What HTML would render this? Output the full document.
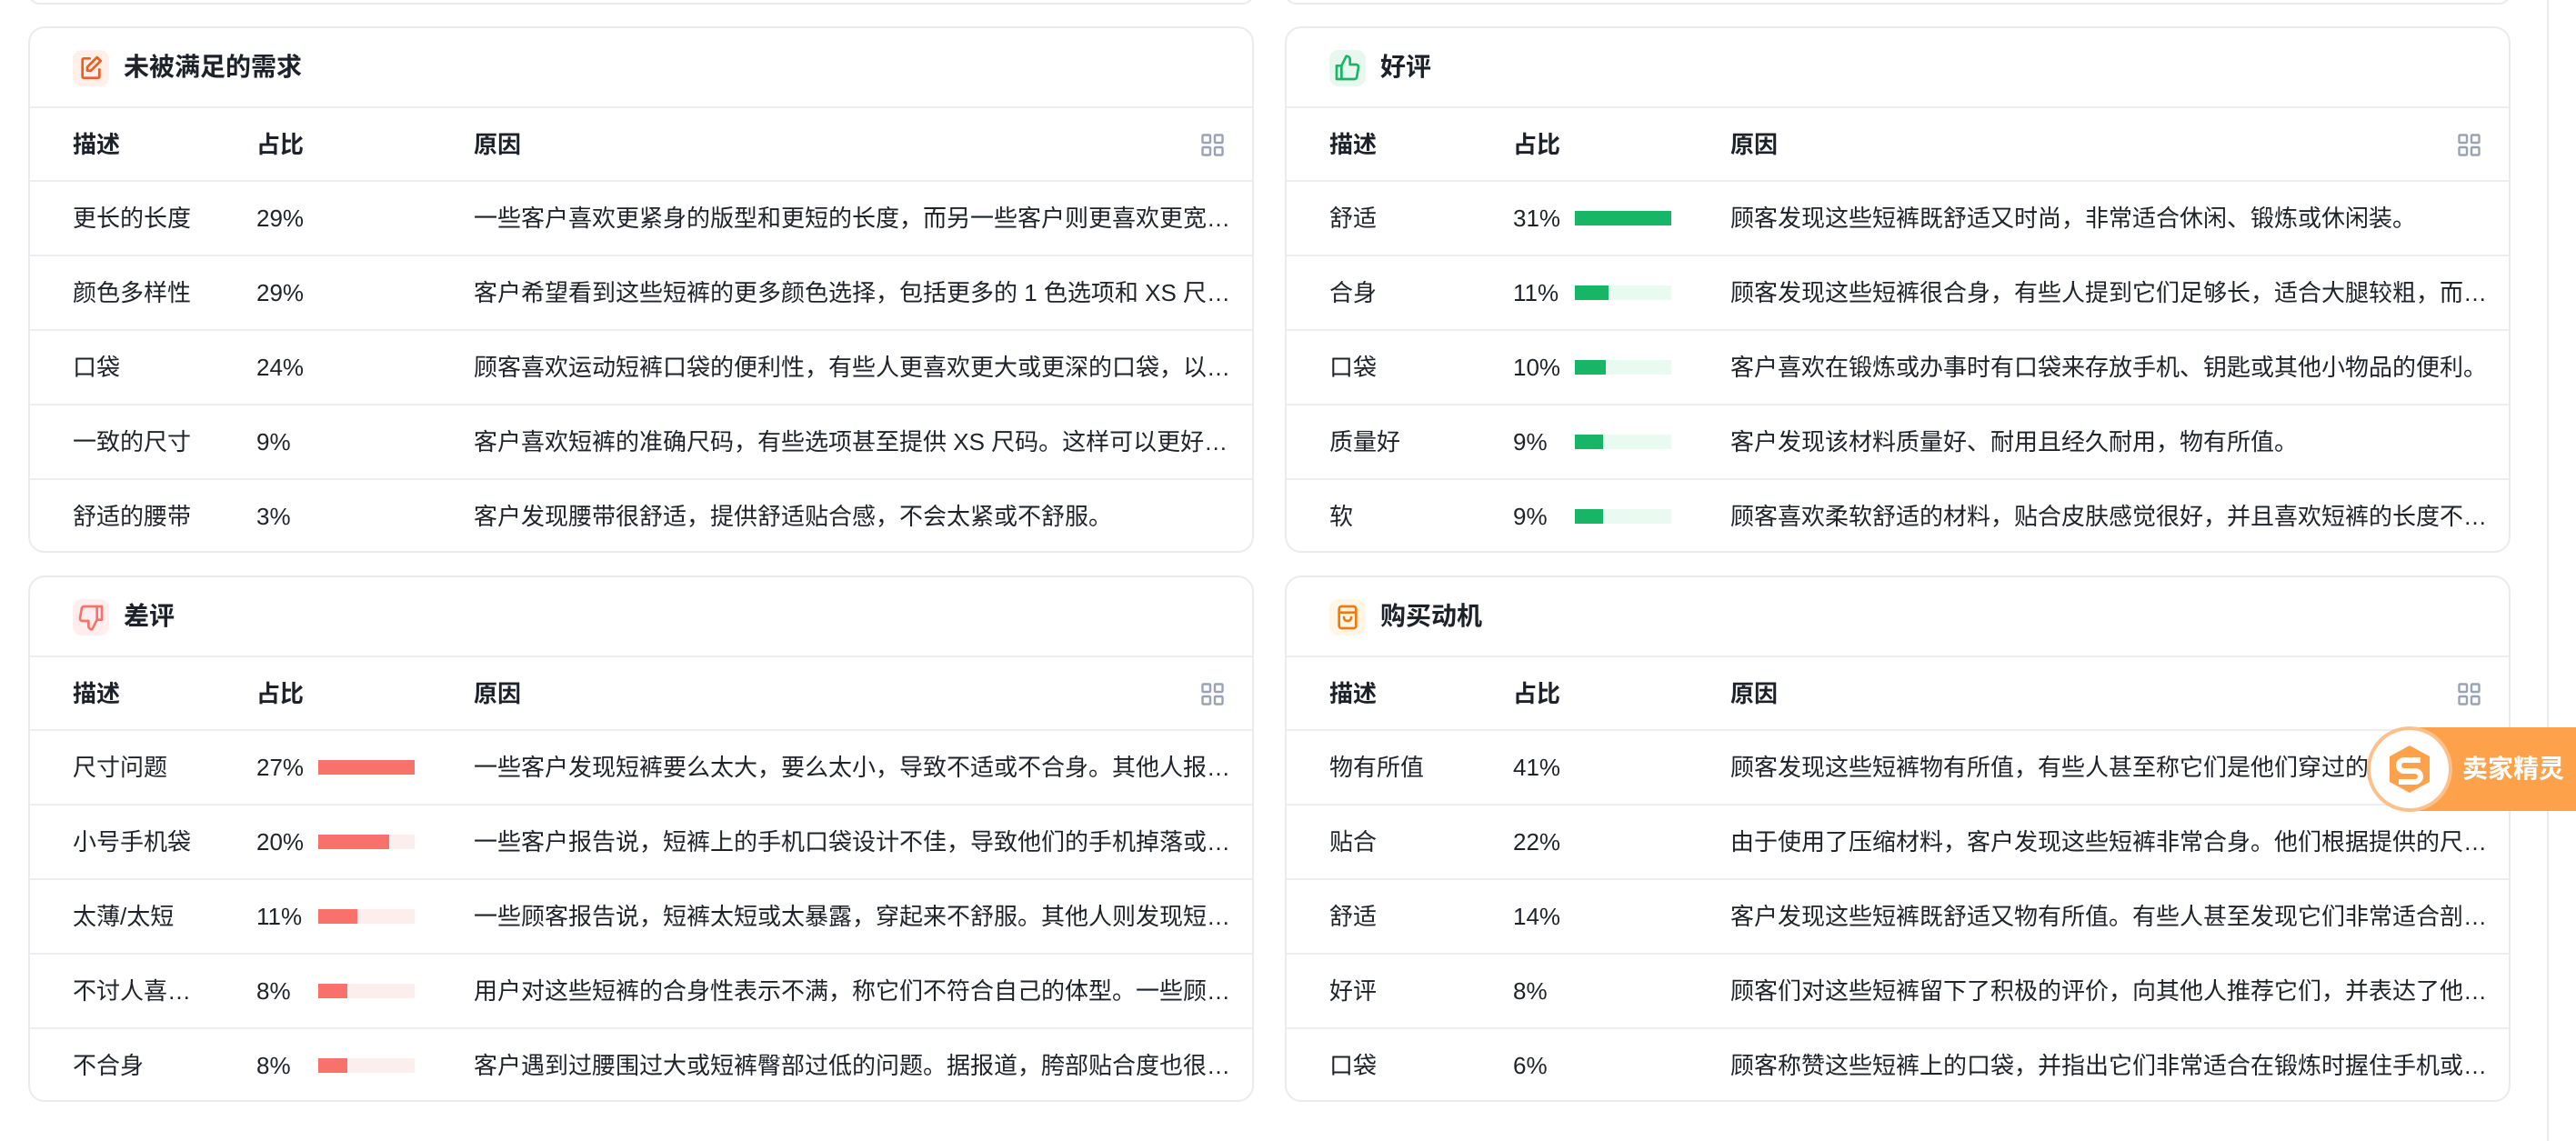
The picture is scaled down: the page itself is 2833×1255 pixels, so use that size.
<!DOCTYPE html>
<html><head><meta charset="utf-8"><style>
*{margin:0;padding:0;box-sizing:border-box}
body{width:2833px;height:1255px;background:#fff;position:relative;overflow:hidden;font-family:"Liberation Sans","Noto Sans CJK SC",sans-serif;color:#1f2329}
.card{position:absolute;width:1348px;height:579px;border:2px solid #e9ebef;border-radius:18px;background:#fff;overflow:hidden}
.title{height:88px;border-bottom:2px solid #eceef2;position:relative}
.ib{position:absolute;left:47px;top:24px;width:40px;height:40px;border-radius:10px;display:flex;align-items:center;justify-content:center}
.tt{position:absolute;left:103px;top:0;line-height:86px;font-size:28px;font-weight:bold;color:#1d2129}
.row{height:82px;border-bottom:2px solid #eceef2;position:relative;font-size:26px;line-height:80px}
.row:last-child{border-bottom:none}
.hd{height:81px;font-weight:bold;color:#1d2129}
.c1{position:absolute;left:47px;width:140px;white-space:nowrap;overflow:hidden;text-overflow:ellipsis}
.c2{position:absolute;left:249px}
.c3{position:absolute;left:488px;width:834px;white-space:nowrap;overflow:hidden;text-overflow:ellipsis}
.bar{position:absolute;left:317px;top:32px;width:106px;height:16px}
.g{background:#e9faf1}.g i{display:block;height:100%;background:#16b666}
.r{background:#fdeeee}.r i{display:block;height:100%;background:#f8716a}
.grid{position:absolute;left:1288px;top:28px}
</style></head><body>

<div style="position:absolute;left:31px;top:-20px;width:1348px;height:25px;border:2px solid #e9ebef;border-radius:18px"></div>
<div style="position:absolute;left:1413px;top:-20px;width:1348px;height:25px;border:2px solid #e9ebef;border-radius:18px"></div>
<div style="position:absolute;left:2801px;top:0;width:2px;height:1255px;background:#e8e9ee"></div>

<!-- card 1 -->
<div class="card" style="left:31px;top:29px">
<div class="title"><div class="ib" style="background:#fff1ea"><svg width="32" height="32" viewBox="0 0 24 24" fill="none" stroke="#f25c1f" stroke-width="2" stroke-linecap="round" stroke-linejoin="round"><path d="M11 4H6a1 1 0 0 0-1 1v14a1 1 0 0 0 1 1h12a1 1 0 0 0 1-1v-6"/><path d="M17 3l3 3-8 8h-3v-3z"/></svg></div><div class="tt">未被满足的需求</div></div>
<div class="row hd"><span class="c1">描述</span><span class="c2">占比</span><span class="c3">原因</span><svg class="grid" width="25" height="25" viewBox="0 0 25 25" fill="none" stroke="#9aa3b5" stroke-width="2.4"><rect x="1.5" y="1.5" width="8.5" height="8.5" rx="1"/><rect x="15" y="1.5" width="8.5" height="8.5" rx="1"/><rect x="1.5" y="15" width="8.5" height="8.5" rx="1"/><rect x="15" y="15" width="8.5" height="8.5" rx="1"/></svg></div>
<div class="row"><span class="c1">更长的长度</span><span class="c2">29%</span><span class="c3">一些客户喜欢更紧身的版型和更短的长度，而另一些客户则更喜欢更宽松的版型和更长的长度。</span></div>
<div class="row"><span class="c1">颜色多样性</span><span class="c2">29%</span><span class="c3">客户希望看到这些短裤的更多颜色选择，包括更多的 1 色选项和 XS 尺码选项。</span></div>
<div class="row"><span class="c1">口袋</span><span class="c2">24%</span><span class="c3">顾客喜欢运动短裤口袋的便利性，有些人更喜欢更大或更深的口袋，以便存放物品。</span></div>
<div class="row"><span class="c1">一致的尺寸</span><span class="c2">9%</span><span class="c3">客户喜欢短裤的准确尺码，有些选项甚至提供 XS 尺码。这样可以更好地贴合身形。</span></div>
<div class="row"><span class="c1">舒适的腰带</span><span class="c2">3%</span><span class="c3">客户发现腰带很舒适，提供舒适贴合感，不会太紧或不舒服。</span></div>
</div>

<!-- card 2 -->
<div class="card" style="left:1413px;top:29px">
<div class="title"><div class="ib" style="background:#e8f8ef"><svg width="32" height="32" viewBox="0 0 24 24" fill="none" stroke="#16b666" stroke-width="2" stroke-linejoin="round"><path d="M7 10v11H3V10z"/><path d="M7 10l4-8c1.5 0 3 1 3 3v4h5a2 2 0 0 1 2 2.3l-1.3 7.5A2 2 0 0 1 17.7 21H7"/></svg></div><div class="tt">好评</div></div>
<div class="row hd"><span class="c1">描述</span><span class="c2">占比</span><span class="c3">原因</span><svg class="grid" width="25" height="25" viewBox="0 0 25 25" fill="none" stroke="#9aa3b5" stroke-width="2.4"><rect x="1.5" y="1.5" width="8.5" height="8.5" rx="1"/><rect x="15" y="1.5" width="8.5" height="8.5" rx="1"/><rect x="1.5" y="15" width="8.5" height="8.5" rx="1"/><rect x="15" y="15" width="8.5" height="8.5" rx="1"/></svg></div>
<div class="row"><span class="c1">舒适</span><span class="c2">31%</span><div class="bar g"><i style="width:100%"></i></div><span class="c3">顾客发现这些短裤既舒适又时尚，非常适合休闲、锻炼或休闲装。</span></div>
<div class="row"><span class="c1">合身</span><span class="c2">11%</span><div class="bar g"><i style="width:35%"></i></div><span class="c3">顾客发现这些短裤很合身，有些人提到它们足够长，适合大腿较粗，而且弹性很好。</span></div>
<div class="row"><span class="c1">口袋</span><span class="c2">10%</span><div class="bar g"><i style="width:32%"></i></div><span class="c3">客户喜欢在锻炼或办事时有口袋来存放手机、钥匙或其他小物品的便利。</span></div>
<div class="row"><span class="c1">质量好</span><span class="c2">9%</span><div class="bar g"><i style="width:29%"></i></div><span class="c3">客户发现该材料质量好、耐用且经久耐用，物有所值。</span></div>
<div class="row"><span class="c1">软</span><span class="c2">9%</span><div class="bar g"><i style="width:29%"></i></div><span class="c3">顾客喜欢柔软舒适的材料，贴合皮肤感觉很好，并且喜欢短裤的长度不会太短。</span></div>
</div>

<!-- card 3 -->
<div class="card" style="left:31px;top:633px">
<div class="title"><div class="ib" style="background:#ffeeed"><svg width="32" height="32" viewBox="0 0 24 24" fill="none" stroke="#f8716a" stroke-width="2" stroke-linejoin="round"><path d="M17 14V3h4v11z"/><path d="M17 14l-4 8c-1.5 0-3-1-3-3v-4H5a2 2 0 0 1-2-2.3l1.3-7.5A2 2 0 0 1 6.3 3H17"/></svg></div><div class="tt">差评</div></div>
<div class="row hd"><span class="c1">描述</span><span class="c2">占比</span><span class="c3">原因</span><svg class="grid" width="25" height="25" viewBox="0 0 25 25" fill="none" stroke="#9aa3b5" stroke-width="2.4"><rect x="1.5" y="1.5" width="8.5" height="8.5" rx="1"/><rect x="15" y="1.5" width="8.5" height="8.5" rx="1"/><rect x="1.5" y="15" width="8.5" height="8.5" rx="1"/><rect x="15" y="15" width="8.5" height="8.5" rx="1"/></svg></div>
<div class="row"><span class="c1">尺寸问题</span><span class="c2">27%</span><div class="bar r"><i style="width:100%"></i></div><span class="c3">一些客户发现短裤要么太大，要么太小，导致不适或不合身。其他人报告尺码不一致。</span></div>
<div class="row"><span class="c1">小号手机袋</span><span class="c2">20%</span><div class="bar r"><i style="width:74%"></i></div><span class="c3">一些客户报告说，短裤上的手机口袋设计不佳，导致他们的手机掉落或晃动。</span></div>
<div class="row"><span class="c1">太薄/太短</span><span class="c2">11%</span><div class="bar r"><i style="width:41%"></i></div><span class="c3">一些顾客报告说，短裤太短或太暴露，穿起来不舒服。其他人则发现短裤面料太薄。</span></div>
<div class="row"><span class="c1" style="width:135px">不讨人喜欢的版型</span><span class="c2">8%</span><div class="bar r"><i style="width:30%"></i></div><span class="c3">用户对这些短裤的合身性表示不满，称它们不符合自己的体型。一些顾客认为版型奇怪。</span></div>
<div class="row"><span class="c1">不合身</span><span class="c2">8%</span><div class="bar r"><i style="width:30%"></i></div><span class="c3">客户遇到过腰围过大或短裤臀部过低的问题。据报道，胯部贴合度也很差，令人不适。</span></div>
</div>

<!-- card 4 -->
<div class="card" style="left:1413px;top:633px">
<div class="title"><div class="ib" style="background:#fff6e6"><svg width="32" height="32" viewBox="0 0 24 24" fill="none" stroke="#f07a10" stroke-width="2" stroke-linejoin="round" stroke-linecap="round"><rect x="5" y="3" width="14" height="18" rx="2"/><path d="M5 8h14"/><path d="M9 12c0 2 1.3 3 3 3s3-1 3-3"/></svg></div><div class="tt">购买动机</div></div>
<div class="row hd"><span class="c1">描述</span><span class="c2">占比</span><span class="c3">原因</span><svg class="grid" width="25" height="25" viewBox="0 0 25 25" fill="none" stroke="#9aa3b5" stroke-width="2.4"><rect x="1.5" y="1.5" width="8.5" height="8.5" rx="1"/><rect x="15" y="1.5" width="8.5" height="8.5" rx="1"/><rect x="1.5" y="15" width="8.5" height="8.5" rx="1"/><rect x="15" y="15" width="8.5" height="8.5" rx="1"/></svg></div>
<div class="row"><span class="c1">物有所值</span><span class="c2">41%</span><span class="c3">顾客发现这些短裤物有所值，有些人甚至称它们是他们穿过的最好的短裤。</span></div>
<div class="row"><span class="c1">贴合</span><span class="c2">22%</span><span class="c3">由于使用了压缩材料，客户发现这些短裤非常合身。他们根据提供的尺码表选择了合适的尺码。</span></div>
<div class="row"><span class="c1">舒适</span><span class="c2">14%</span><span class="c3">客户发现这些短裤既舒适又物有所值。有些人甚至发现它们非常适合剖腹产后穿着。</span></div>
<div class="row"><span class="c1">好评</span><span class="c2">8%</span><span class="c3">顾客们对这些短裤留下了积极的评价，向其他人推荐它们，并表达了他们的满意。</span></div>
<div class="row"><span class="c1">口袋</span><span class="c2">6%</span><span class="c3">顾客称赞这些短裤上的口袋，并指出它们非常适合在锻炼时握住手机或其他物品。</span></div>
</div>

<!-- seller sprite widget -->
<div style="position:absolute;left:2650px;top:800px;width:183px;height:92px;background:#fda14b"></div>
<div style="position:absolute;left:2603px;top:799px;width:94px;height:94px;border-radius:50%;background:#fff;border:4px solid #fdc08a;display:flex;align-items:center;justify-content:center">
<svg width="56" height="56" viewBox="0 0 56 56"><polygon points="28,2 50,14 50,42 28,54 6,42 6,14" fill="#fda14b"/><path d="M40 18H22a6 6 0 0 0 0 12h12a6 6 0 0 1 0 12H16" fill="none" stroke="#fff" stroke-width="6"/></svg></div>
<div style="position:absolute;left:2708px;top:800px;line-height:92px;font-size:28px;font-weight:bold;color:#fff">卖家精灵</div>
</body></html>
